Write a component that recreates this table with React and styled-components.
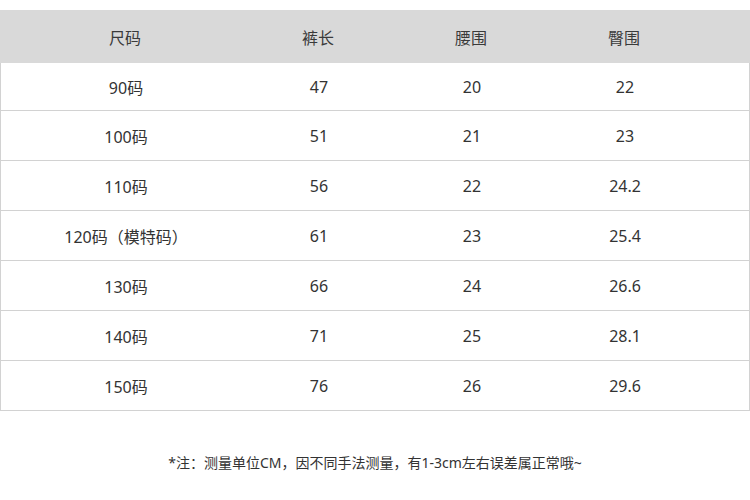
import React from 'react';
import styled, { createGlobalStyle } from 'styled-components';

const GlobalStyle = createGlobalStyle`
  html, body {
    margin: 0;
    padding: 0;
    background: #fff;
  }
  body {
    font-family: 'Noto Sans', 'Noto Sans CJK SC', sans-serif;
    color: #333;
  }
`;

const COLUMNS = '250px 136px 170px 136px 58px';

const header = ['尺码', '裤长', '腰围', '臀围'];

const rows = [
  ['90码', '47', '20', '22'],
  ['100码', '51', '21', '23'],
  ['110码', '56', '22', '24.2'],
  ['120码（模特码）', '61', '23', '25.4'],
  ['130码', '66', '24', '26.6'],
  ['140码', '71', '25', '28.1'],
  ['150码', '76', '26', '29.6'],
];

function SizeChart({ className }) {
  return (
    <div className={className}>
      <Table>
        <HeadRow>
          {header.map((h) => (
            <Cell key={h}>{h}</Cell>
          ))}
          <Cell />
        </HeadRow>
        {rows.map((r, i) => (
          <Row key={r[0]} $first={i === 0}>
            {r.map((c, j) => (
              <Cell key={j}>{c}</Cell>
            ))}
            <Cell />
          </Row>
        ))}
      </Table>
      <Note>*注：测量单位CM，因不同手法测量，有1-3cm左右误差属正常哦~</Note>
    </div>
  );
}

const Table = styled.div`
  margin-top: 10px;
  width: 750px;
`;

const HeadRow = styled.div`
  display: grid;
  grid-template-columns: ${COLUMNS};
  height: 53px;
  background: #d9d9d9;
  font-size: 16px;
  color: #3a3a3a;
`;

const Row = styled.div`
  display: grid;
  grid-template-columns: ${COLUMNS};
  box-sizing: border-box;
  height: ${(p) => (p.$first ? '48px' : '50px')};
  border-left: 1px solid #d2d2d2;
  border-right: 1px solid #d2d2d2;
  border-bottom: 1px solid #d2d2d2;
  font-size: 16px;
  color: #333;
`;

const Cell = styled.div`
  display: flex;
  align-items: center;
  justify-content: center;
  white-space: nowrap;
`;

const Note = styled.div`
  margin-top: 41px;
  text-align: center;
  font-size: 14px;
  color: #333;
`;

const App = styled(SizeChart)`
  width: 750px;
  height: 500px;
  overflow: hidden;
`;

export default function Root() {
  return (
    <>
      <GlobalStyle />
      <App />
    </>
  );
}
